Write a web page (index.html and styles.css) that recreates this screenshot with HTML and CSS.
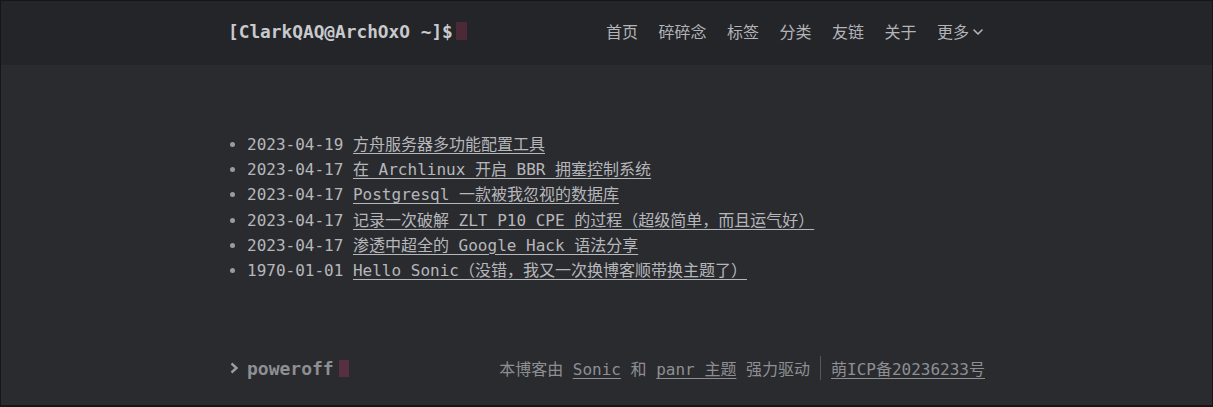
FILE: index.html
```html
<!DOCTYPE html>
<html lang="zh-CN">
<head>
    <meta charset="UTF-8">
    <meta name="viewport" content="width=device-width, initial-scale=1.0">
    <title>ClarkQAQ</title>
    <link rel="stylesheet" href="styles.css">
</head>
<body>
    <div class="page">
        <header class="header">
            <div class="header-inner">
                <a class="logo" href="#">[ClarkQAQ@ArchOxO ~]$<span class="cursor"></span></a>
                <nav class="menu">
                    <a href="#">首页</a>
                    <a href="#">碎碎念</a>
                    <a href="#">标签</a>
                    <a href="#">分类</a>
                    <a href="#">友链</a>
                    <a href="#">关于</a>
                    <a href="#" class="more">更多
                        <svg class="chevron" width="12" height="12" viewBox="0 0 12 12"><path d="M2 4l4 4 4-4" fill="none" stroke="currentColor" stroke-width="1.6" stroke-linecap="round" stroke-linejoin="round"/></svg>
                    </a>
                </nav>
            </div>
        </header>

        <main class="content">
            <ul class="posts">
                <li>2023-04-19 <a href="#">方舟服务器多功能配置工具</a></li>
                <li>2023-04-17 <a href="#">在 Archlinux 开启 BBR 拥塞控制系统</a></li>
                <li>2023-04-17 <a href="#">Postgresql 一款被我忽视的数据库</a></li>
                <li>2023-04-17 <a href="#">记录一次破解 ZLT P10 CPE 的过程（超级简单，而且运气好）</a></li>
                <li>2023-04-17 <a href="#">渗透中超全的 Google Hack 语法分享</a></li>
                <li>1970-01-01 <a href="#">Hello Sonic（没错，我又一次换博客顺带换主题了）</a></li>
            </ul>
        </main>

        <footer class="footer">
            <div class="footer-inner">
                <div class="prompt">
                    <svg class="arrow" width="8" height="12" viewBox="0 0 8 12"><path d="M1.5 1.5l5 4.5-5 4.5" fill="none" stroke="currentColor" stroke-width="2.4" stroke-linejoin="miter"/></svg>
                    poweroff<span class="cursor small"></span>
                </div>
                <div class="copyright">
                    <span>本博客由 <a href="#">Sonic</a> 和 <a href="#">panr 主题</a> 强力驱动</span>
                    <span class="divider"></span>
                    <a href="#">萌ICP备20236233号</a>
                </div>
            </div>
        </footer>
    </div>
</body>
</html>
```

FILE: styles.css
```css
* {
    margin: 0;
    padding: 0;
    box-sizing: border-box;
}

body {
    background-color: #151618;
    font-family: "DejaVu Sans Mono", "Noto Sans CJK SC", monospace;
    font-size: 16px;
    color: #b6b7bb;
}

a {
    color: inherit;
}

.page {
    height: 407px;
    border: 1px solid #151618;
    border-bottom-width: 2px;
    background-color: #2a2b2f;
    display: flex;
    flex-direction: column;
}

.header {
    background-color: #242529;
    height: 64px;
}

.header-inner,
.footer-inner {
    width: 757px;
    margin: 0 auto;
    display: flex;
    align-items: center;
    justify-content: space-between;
}

.header-inner {
    height: 100%;
    padding-bottom: 4px;
}

.logo {
    font-size: 17.8px;
    font-weight: bold;
    color: #c9cacd;
    text-decoration: none;
    display: flex;
    align-items: center;
}

.cursor {
    display: inline-block;
    width: 11px;
    height: 18px;
    margin-left: 3px;
    background-color: #4b2a36;
}

.menu {
    display: flex;
    align-items: center;
    gap: 20.5px;
    font-family: "Noto Sans CJK SC", sans-serif;
    font-size: 16px;
    margin-right: 1px;
}

.menu a {
    text-decoration: none;
    color: #b3b4b8;
}

.menu .more {
    display: flex;
    align-items: center;
    gap: 3px;
}

.chevron {
    margin-top: 2px;
}

.content {
    flex: 1;
    width: 757px;
    margin: 0 auto;
    padding-top: 67px;
}

.posts {
    padding-left: 19px;
    line-height: 25.2px;
}

.posts li::marker {
    color: #9a9b9f;
}

.posts a {
    text-underline-offset: 3px;
}

.footer {
    padding-bottom: 25px;
    color: #8e8f93;
}

.footer-inner {
    height: 24px;
}

.prompt {
    font-size: 18px;
    font-weight: bold;
    display: flex;
    align-items: center;
    padding-left: 2px;
}

.arrow {
    margin-right: 9px;
    color: #9a9b9f;
}

.cursor.small {
    width: 10px;
    height: 17px;
    margin-left: 5px;
    background-color: #56303f;
}

.copyright {
    display: flex;
    align-items: center;
}

.copyright a {
    text-underline-offset: 3px;
}

.divider {
    display: inline-block;
    width: 1px;
    height: 24px;
    background-color: #56575b;
    margin: 0 10px;
}
```
